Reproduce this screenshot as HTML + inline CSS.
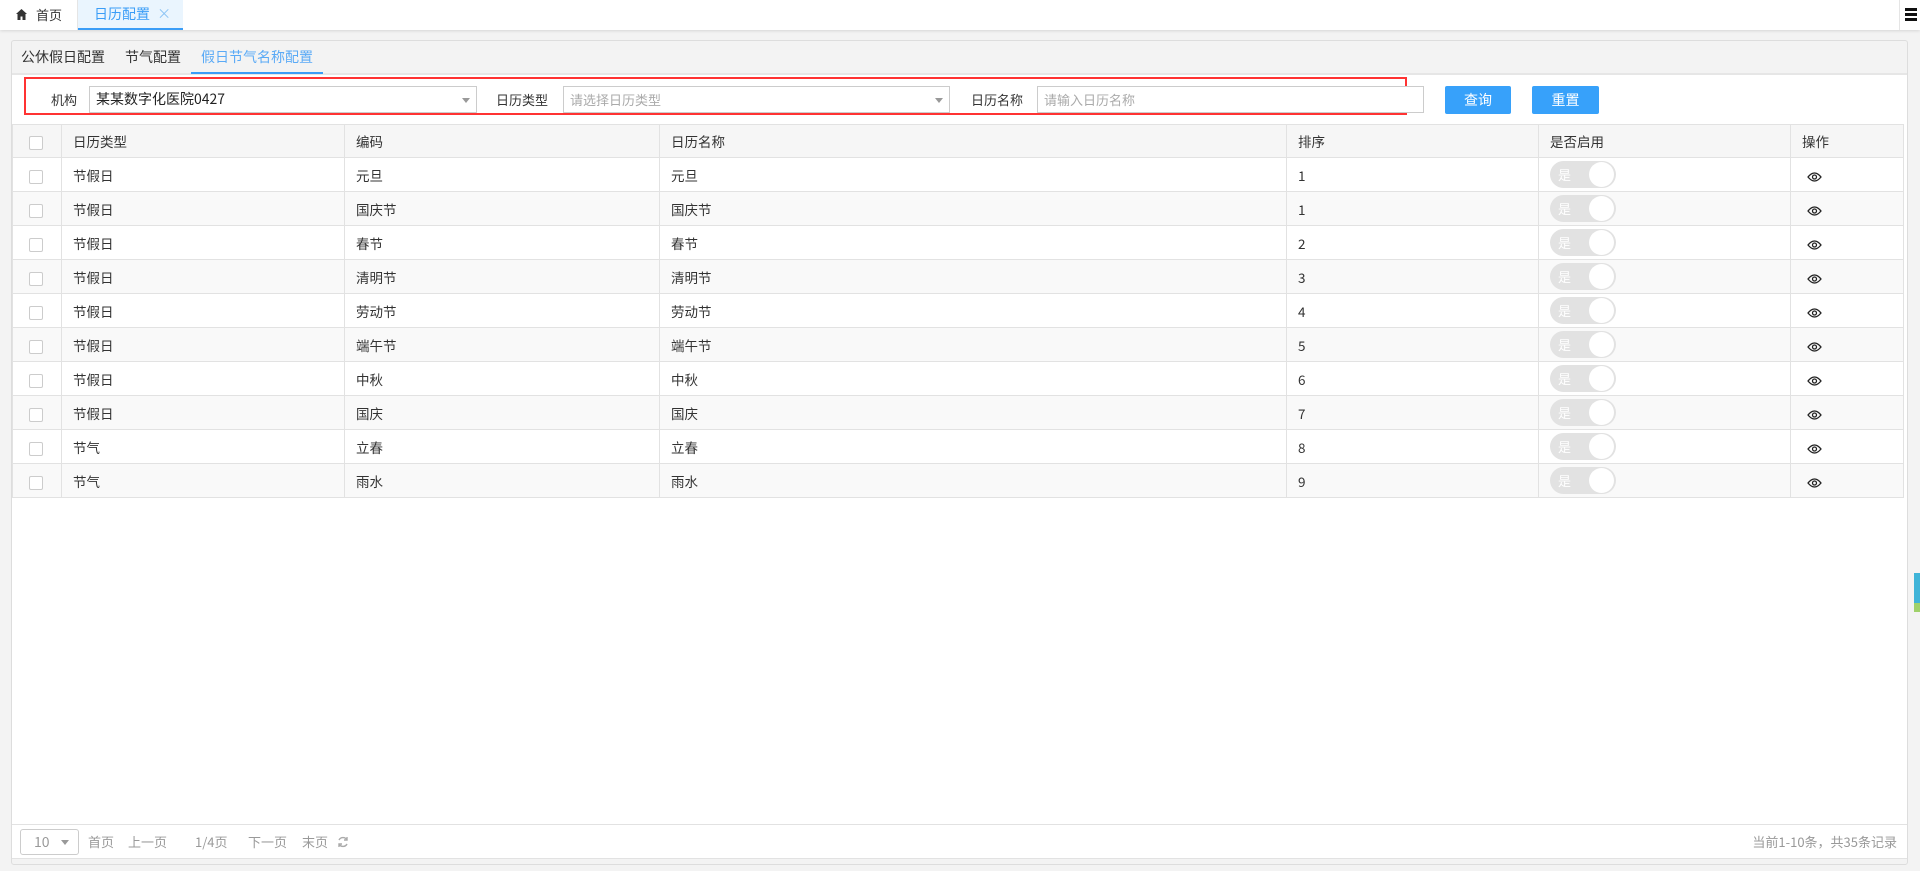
<!DOCTYPE html>
<html><head><meta charset="utf-8"><style>
*{margin:0;padding:0;box-sizing:border-box}
body{width:1920px;height:871px;background:#f3f3f3;font-family:"Noto Sans CJK SC","Liberation Sans",sans-serif;color:#333;position:relative;overflow:hidden}
.abs{position:absolute}
.top{left:0;top:0;width:1920px;height:30px;background:#fff;box-shadow:0 1px 3px rgba(0,0,0,.12)}
.tab1{left:0;top:0;width:77px;height:30px;font-size:13px;line-height:30px}
.tab2{left:78px;top:0;width:105px;height:30px;background:#eaf5fe;color:#3a9df7;font-size:14px;line-height:28px;border-bottom:2px solid #3a9df7;padding-left:16px}
.panel{left:11px;top:40px;width:1897px;height:825px;border:1px solid #ddd;border-radius:3px;background:#f3f3f3}
.sub{top:47px;font-size:14px;line-height:20px}
.white{left:12px;top:75px;width:1895px;height:783px;background:#fff}
.red{left:24px;top:77px;width:1383px;height:38px;border:2px solid #f33}
.inp{height:27px;border:1px solid #ccc;font-size:14px;line-height:25px;padding-left:6px;background:#fff}
.lbl{font-size:13px;line-height:27px}
.btn{top:86px;height:28px;background:#37a1fa;color:#fff;font-size:14px;line-height:28px;text-align:center;border-radius:2px}
.arrow{position:absolute;right:6px;top:11px;width:0;height:0;border-left:4px solid transparent;border-right:4px solid transparent;border-top:5px solid #999}
table{position:absolute;left:12px;top:124px;width:1892px;border-collapse:collapse;font-size:13.5px}
td{height:34px;border:1px solid #e2e2e2;padding-left:11px;vertical-align:middle;white-space:nowrap;line-height:20px}
tr.h td{background:#f6f6f6;height:33px}
tr:nth-child(odd):not(.h) td{background:#f9f9f9}
.cb{display:inline-block;width:14px;height:14px;border:1px solid #ccc;border-radius:2px;background:#fff;vertical-align:middle}
.tg{display:inline-block;position:relative;width:66px;height:27px;border-radius:14px;background:#e2e2e2;vertical-align:middle}
.tg span{position:absolute;left:8px;top:4px;color:#fff;font-size:13px;line-height:19px}
.tg i{position:absolute;right:2px;top:1px;width:25px;height:25px;border-radius:50%;background:#fff}
.foot{font-size:13px;color:#999;top:832px;line-height:20px}
svg{vertical-align:middle}
</style></head><body>
<div class="abs top"></div>
<div class="abs tab1"><svg class="abs" style="left:16px;top:9px" width="11" height="11" viewBox="0 0 11 11"><path d="M5.5 0L0 5h1.5v6h3V7.5h2V11h3V5H11z" fill="#333"/></svg><span class="abs" style="left:36px">首页</span></div>
<div class="abs" style="left:77px;top:0;width:1px;height:30px;background:#e5e5e5"></div>
<div class="abs tab2">日历配置 <span style="color:#8cc4f5;font-size:14px;margin-left:4px">×</span></div>
<div class="abs" style="left:1899px;top:0;width:1px;height:30px;background:#e5e5e5"></div>
<div class="abs" style="left:1905px;top:8px;width:12px;height:3px;background:#111;box-shadow:0 5px 0 #111,0 10px 0 #111"></div>
<div class="abs panel"></div>
<div class="abs" style="left:12px;top:73px;width:1895px;height:2px;background:#e6e6e6"></div>
<div class="abs sub" style="left:21px">公休假日配置</div>
<div class="abs sub" style="left:125px">节气配置</div>
<div class="abs sub" style="left:201px;color:#5aaaf6">假日节气名称配置</div>
<div class="abs" style="left:191px;top:72px;width:132px;height:2px;background:#3a9df7"></div>
<div class="abs white"></div>
<div class="abs red"></div>
<div class="abs lbl" style="left:51px;top:86px">机构</div>
<div class="abs inp" style="left:89px;top:86px;width:388px;color:#222">某某数字化医院0427<i class="arrow"></i></div>
<div class="abs lbl" style="left:496px;top:86px">日历类型</div>
<div class="abs inp" style="left:563px;top:86px;width:387px;color:#aaa;font-size:13px">请选择日历类型<i class="arrow"></i></div>
<div class="abs lbl" style="left:971px;top:86px">日历名称</div>
<div class="abs inp" style="left:1037px;top:86px;width:387px;color:#aaa;font-size:13px">请输入日历名称</div>
<div class="abs btn" style="left:1445px;width:66px">查询</div>
<div class="abs btn" style="left:1532px;width:67px">重置</div>
<table>
<colgroup><col style="width:49px"><col style="width:283px"><col style="width:315px"><col style="width:627px"><col style="width:252px"><col style="width:252px"><col></colgroup>
<tr class="h"><td style="padding-left:16px"><i class="cb"></i></td><td>日历类型</td><td>编码</td><td>日历名称</td><td>排序</td><td>是否启用</td><td>操作</td></tr>
<tr><td style="padding-left:16px"><i class="cb"></i></td><td>节假日</td><td>元旦</td><td>元旦</td><td>1</td><td><span class="tg"><span>是</span><i></i></span></td><td style="padding-left:16px"><svg width="15" height="10" viewBox="0 0 15 10"><path d="M1 5Q7.5-3 14 5Q7.5 13 1 5Z" fill="none" stroke="#222" stroke-width="1.3"/><circle cx="7.5" cy="5" r="2" fill="none" stroke="#222" stroke-width="1.3"/></svg></td></tr>
<tr><td style="padding-left:16px"><i class="cb"></i></td><td>节假日</td><td>国庆节</td><td>国庆节</td><td>1</td><td><span class="tg"><span>是</span><i></i></span></td><td style="padding-left:16px"><svg width="15" height="10" viewBox="0 0 15 10"><path d="M1 5Q7.5-3 14 5Q7.5 13 1 5Z" fill="none" stroke="#222" stroke-width="1.3"/><circle cx="7.5" cy="5" r="2" fill="none" stroke="#222" stroke-width="1.3"/></svg></td></tr>
<tr><td style="padding-left:16px"><i class="cb"></i></td><td>节假日</td><td>春节</td><td>春节</td><td>2</td><td><span class="tg"><span>是</span><i></i></span></td><td style="padding-left:16px"><svg width="15" height="10" viewBox="0 0 15 10"><path d="M1 5Q7.5-3 14 5Q7.5 13 1 5Z" fill="none" stroke="#222" stroke-width="1.3"/><circle cx="7.5" cy="5" r="2" fill="none" stroke="#222" stroke-width="1.3"/></svg></td></tr>
<tr><td style="padding-left:16px"><i class="cb"></i></td><td>节假日</td><td>清明节</td><td>清明节</td><td>3</td><td><span class="tg"><span>是</span><i></i></span></td><td style="padding-left:16px"><svg width="15" height="10" viewBox="0 0 15 10"><path d="M1 5Q7.5-3 14 5Q7.5 13 1 5Z" fill="none" stroke="#222" stroke-width="1.3"/><circle cx="7.5" cy="5" r="2" fill="none" stroke="#222" stroke-width="1.3"/></svg></td></tr>
<tr><td style="padding-left:16px"><i class="cb"></i></td><td>节假日</td><td>劳动节</td><td>劳动节</td><td>4</td><td><span class="tg"><span>是</span><i></i></span></td><td style="padding-left:16px"><svg width="15" height="10" viewBox="0 0 15 10"><path d="M1 5Q7.5-3 14 5Q7.5 13 1 5Z" fill="none" stroke="#222" stroke-width="1.3"/><circle cx="7.5" cy="5" r="2" fill="none" stroke="#222" stroke-width="1.3"/></svg></td></tr>
<tr><td style="padding-left:16px"><i class="cb"></i></td><td>节假日</td><td>端午节</td><td>端午节</td><td>5</td><td><span class="tg"><span>是</span><i></i></span></td><td style="padding-left:16px"><svg width="15" height="10" viewBox="0 0 15 10"><path d="M1 5Q7.5-3 14 5Q7.5 13 1 5Z" fill="none" stroke="#222" stroke-width="1.3"/><circle cx="7.5" cy="5" r="2" fill="none" stroke="#222" stroke-width="1.3"/></svg></td></tr>
<tr><td style="padding-left:16px"><i class="cb"></i></td><td>节假日</td><td>中秋</td><td>中秋</td><td>6</td><td><span class="tg"><span>是</span><i></i></span></td><td style="padding-left:16px"><svg width="15" height="10" viewBox="0 0 15 10"><path d="M1 5Q7.5-3 14 5Q7.5 13 1 5Z" fill="none" stroke="#222" stroke-width="1.3"/><circle cx="7.5" cy="5" r="2" fill="none" stroke="#222" stroke-width="1.3"/></svg></td></tr>
<tr><td style="padding-left:16px"><i class="cb"></i></td><td>节假日</td><td>国庆</td><td>国庆</td><td>7</td><td><span class="tg"><span>是</span><i></i></span></td><td style="padding-left:16px"><svg width="15" height="10" viewBox="0 0 15 10"><path d="M1 5Q7.5-3 14 5Q7.5 13 1 5Z" fill="none" stroke="#222" stroke-width="1.3"/><circle cx="7.5" cy="5" r="2" fill="none" stroke="#222" stroke-width="1.3"/></svg></td></tr>
<tr><td style="padding-left:16px"><i class="cb"></i></td><td>节气</td><td>立春</td><td>立春</td><td>8</td><td><span class="tg"><span>是</span><i></i></span></td><td style="padding-left:16px"><svg width="15" height="10" viewBox="0 0 15 10"><path d="M1 5Q7.5-3 14 5Q7.5 13 1 5Z" fill="none" stroke="#222" stroke-width="1.3"/><circle cx="7.5" cy="5" r="2" fill="none" stroke="#222" stroke-width="1.3"/></svg></td></tr>
<tr><td style="padding-left:16px"><i class="cb"></i></td><td>节气</td><td>雨水</td><td>雨水</td><td>9</td><td><span class="tg"><span>是</span><i></i></span></td><td style="padding-left:16px"><svg width="15" height="10" viewBox="0 0 15 10"><path d="M1 5Q7.5-3 14 5Q7.5 13 1 5Z" fill="none" stroke="#222" stroke-width="1.3"/><circle cx="7.5" cy="5" r="2" fill="none" stroke="#222" stroke-width="1.3"/></svg></td></tr>
</table>
<div class="abs" style="left:12px;top:824px;width:1895px;height:1px;background:#e2e2e2"></div>
<div class="abs" style="left:12px;top:858px;width:1895px;height:1px;background:#e2e2e2"></div>
<div class="abs" style="left:20px;top:829px;width:59px;height:26px;border:1px solid #ccc;border-radius:3px;font-size:14px;color:#999;line-height:24px;padding-left:13px">10<i class="arrow" style="top:10px;right:9px"></i></div>
<div class="abs foot" style="left:88px">首页</div>
<div class="abs foot" style="left:128px">上一页</div>
<div class="abs foot" style="left:195px">1/4页</div>
<div class="abs foot" style="left:248px">下一页</div>
<div class="abs foot" style="left:302px">末页</div>
<svg class="abs" style="left:337px;top:836px" width="12" height="12" viewBox="0 0 12 12"><path d="M10 4A4.5 4.5 0 0 0 2 4M2 8A4.5 4.5 0 0 0 10 8" fill="none" stroke="#aaa" stroke-width="1.4"/><path d="M10 1v3H7M2 11V8h3" fill="none" stroke="#aaa" stroke-width="1.4"/></svg>
<div class="abs foot" style="right:23px">当前1-10条，共35条记录</div>
<div class="abs" style="left:1914px;top:573px;width:6px;height:30px;background:#3fb4d8"></div>
<div class="abs" style="left:1914px;top:603px;width:6px;height:9px;background:#9fd16a"></div>
</body></html>
